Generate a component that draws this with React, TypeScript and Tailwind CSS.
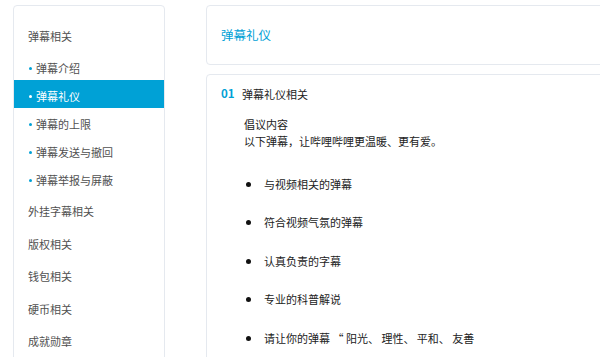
import React from 'react';

interface NavItem {
  label: string;
  active?: boolean;
}

const subItems: NavItem[] = [
  { label: '弹幕介绍' },
  { label: '弹幕礼仪', active: true },
  { label: '弹幕的上限' },
  { label: '弹幕发送与撤回' },
  { label: '弹幕举报与屏蔽' },
];

const topItems = ['外挂字幕相关', '版权相关', '钱包相关', '硬币相关', '成就勋章'];

const points = [
  '与视频相关的弹幕',
  '符合视频气氛的弹幕',
  '认真负责的字幕',
  '专业的科普解说',
  '请让你的弹幕 “ 阳光、 理性、 平和、 友善',
];

export const App: React.FC = () => {
  return (
    <div className="h-[357px] w-[600px] overflow-hidden bg-white font-['Noto_Sans_CJK_SC','Noto_Sans',sans-serif]">
      <div className="flex pl-[13px] pt-[5px]">
        {/* Sidebar */}
        <aside className="w-[152px] h-[400px] shrink-0 rounded-[4px] border border-[#e5e9ef] pt-[15px]">
          <div className="h-[31px] pl-[14px] text-[11px] leading-[31px] text-[#505050]">
            弹幕相关
          </div>
          {subItems.map((item) => (
            <div
              key={item.label}
              className={
                item.active
                  ? 'flex h-[28px] items-center gap-[4px] bg-[#00a1d6] pl-[15px] pt-[4px] text-[11px] text-white'
                  : 'flex h-[28px] items-center gap-[4px] pl-[15px] pt-[4px] text-[11px] text-[#505050]'
              }
            >
              <span
                className={
                  item.active
                    ? 'h-[3px] w-[3px] rounded-full bg-white'
                    : 'h-[3px] w-[3px] rounded-full bg-[#00a1d6]'
                }
              />
              <span>{item.label}</span>
            </div>
          ))}
          <div className="mt-[3px]">
            {topItems.map((label) => (
              <div
                key={label}
                className="h-[32.5px] pl-[14px] text-[11px] leading-[32.5px] text-[#505050]"
              >
                {label}
              </div>
            ))}
          </div>
        </aside>

        {/* Main */}
        <main className="ml-[41px] w-[420px] shrink-0">
          <div className="flex h-[60px] items-center rounded-[4px] border border-[#e5e9ef] pl-[14px]">
            <h1 className="text-[12.5px] text-[#00a1d6]">弹幕礼仪</h1>
          </div>

          <section className="mt-[9px] h-[320px] rounded-[4px] border border-[#e5e9ef] pl-[14px] pt-[10px]">
            <div className="flex h-[18px] items-center">
              <span className="w-[21px] text-[11.5px] font-bold text-[#00a1d6]">01</span>
              <span className="text-[11px] text-[#222]">弹幕礼仪相关</span>
            </div>
            <div className="mt-[13px] pl-[23px] text-[11px] leading-[17px] text-[#222]">
              <p>倡议内容</p>
              <p>以下弹幕，让哔哩哔哩更温暖、更有爱。</p>
              <ul className="mt-[15px]">
                {points.map((text) => (
                  <li key={text} className="flex h-[38.5px] items-center">
                    <span className="ml-[2px] h-[5px] w-[5px] rounded-full bg-[#111]" />
                    <span className="ml-[13px]">{text}</span>
                  </li>
                ))}
              </ul>
            </div>
          </section>
        </main>
      </div>
    </div>
  );
};

export default App;
